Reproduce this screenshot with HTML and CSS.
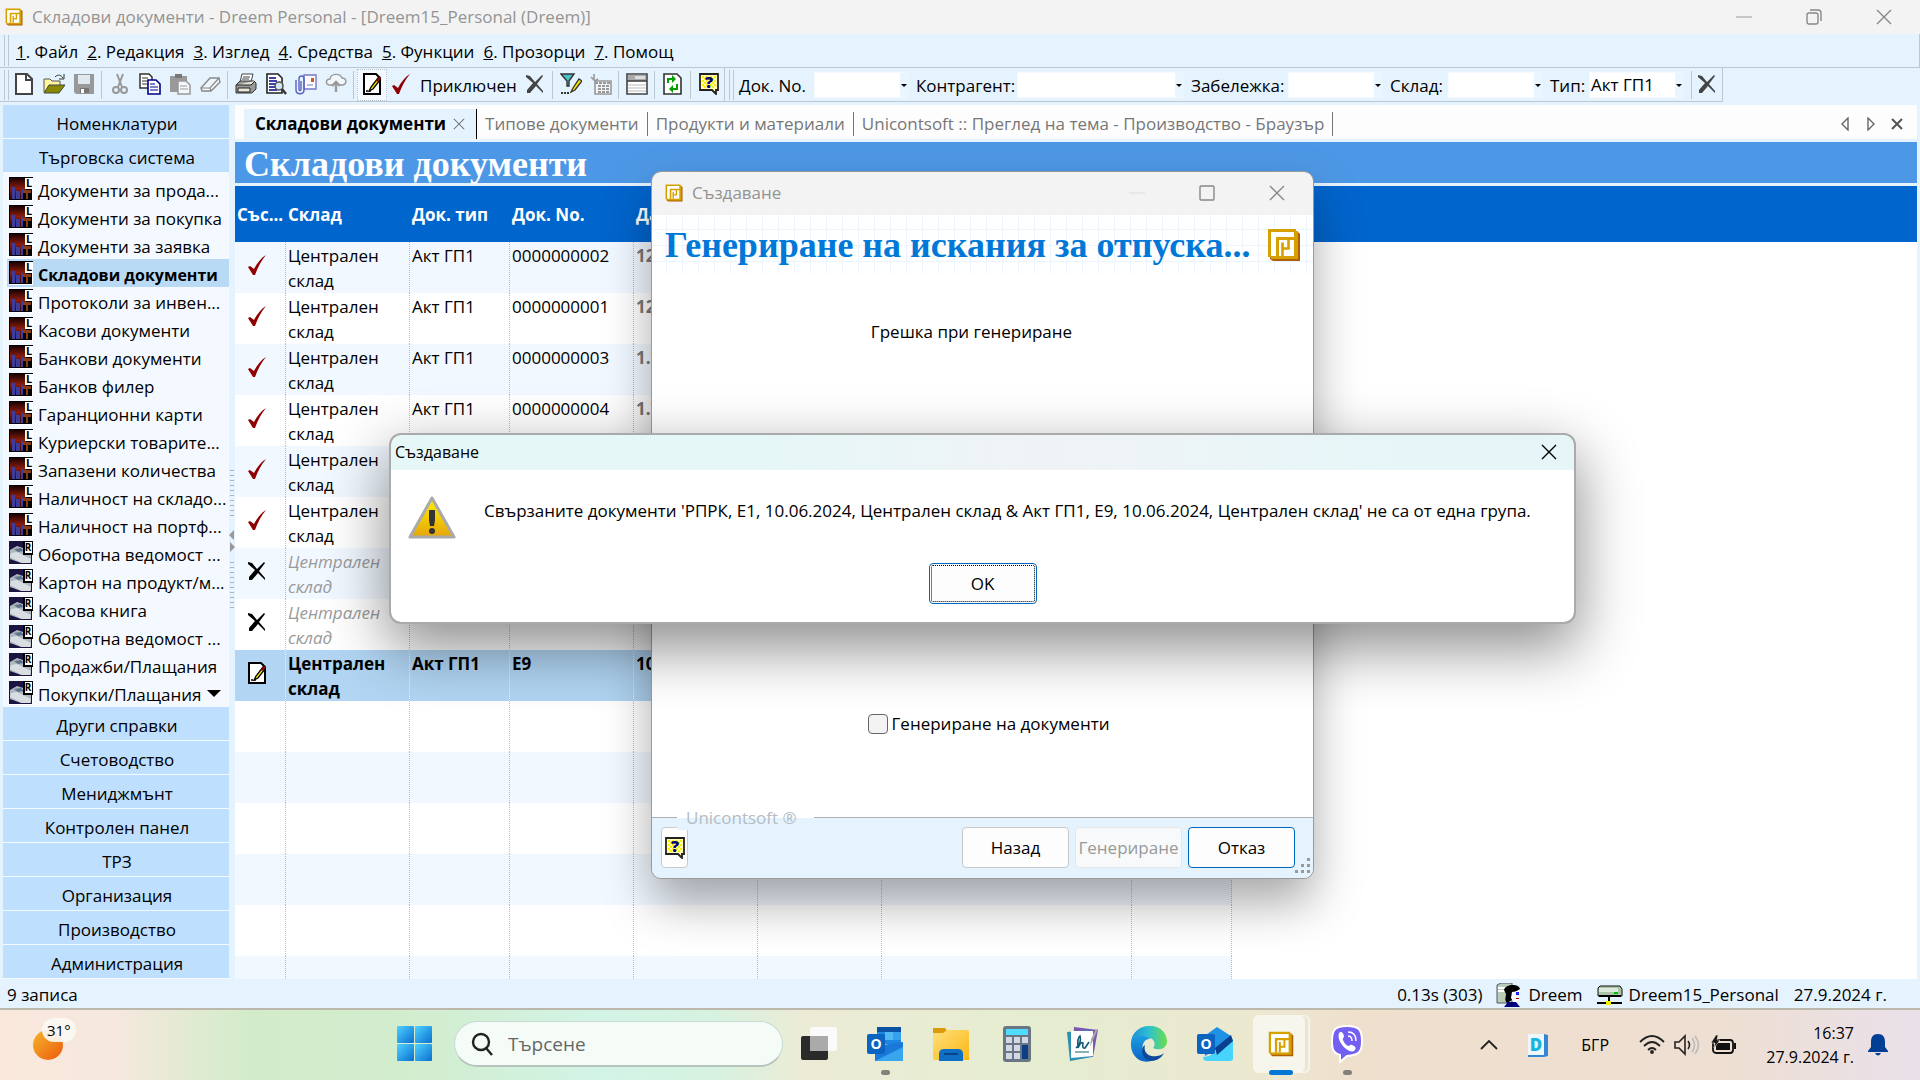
FILE: index.html
```html
<!DOCTYPE html>
<html lang="bg">
<head>
<meta charset="utf-8">
<title>Складови документи - Dreem Personal</title>
<link rel="stylesheet" href="styles.css">
</head>
<body>
<svg class="defs" aria-hidden="true">
  <defs>
    <linearGradient id="gSun" x1="0" y1="0" x2="1" y2="1"><stop offset="0" stop-color="#f3b62c"/><stop offset="1" stop-color="#ee5a0c"/></linearGradient>
    <linearGradient id="gWin" x1="0" y1="0" x2="1" y2="1"><stop offset="0" stop-color="#4fd2ff"/><stop offset="1" stop-color="#0a6fd0"/></linearGradient>
    <linearGradient id="gFolder" x1="0" y1="0" x2="1" y2="1"><stop offset="0" stop-color="#ffe07c"/><stop offset="1" stop-color="#fbb712"/></linearGradient>
    <linearGradient id="gWarn" x1="0" y1="0" x2="0" y2="1"><stop offset="0" stop-color="#fff200"/><stop offset="1" stop-color="#e6a408"/></linearGradient>
    <linearGradient id="gEdge" x1="0" y1="0" x2="1" y2="0"><stop offset="0" stop-color="#1c8fd8"/><stop offset=".5" stop-color="#2fc0d0"/><stop offset="1" stop-color="#6ade4c"/></linearGradient>
    <linearGradient id="gEdge2" x1="0" y1="0" x2="0" y2="1"><stop offset="0" stop-color="#1b9de2"/><stop offset="1" stop-color="#0b62c4"/></linearGradient>
    <linearGradient id="gRed" x1="0" y1="0" x2="0" y2="1"><stop offset="0" stop-color="#1c0202"/><stop offset=".5" stop-color="#8c1d0c"/><stop offset="1" stop-color="#2a0804"/></linearGradient>
  </defs>
  <symbol id="logo" viewBox="0 0 34 34"><path fill="#b06000" d="M6 4h25l2 2v27H6L3 31z"/><path fill="#d6a000" d="M1 1h28v2h2v28H4v-2H1z"/><path fill="#fff" d="M4 4h23v24H4z"/><path fill="none" stroke="#d6a000" stroke-width="3" d="M28 10.500H10.500V28"/><path fill="none" stroke="#d6a000" stroke-width="2.600" d="M15.500 28V14.500M21.500 11V20.500H15"/></symbol>
  <symbol id="new" viewBox="0 0 22 22"><path d="M3 1h11l5 5v15H3z" fill="#fff" stroke="#444" stroke-width="2"/><path d="M13 1v6h6" fill="none" stroke="#444" stroke-width="2"/></symbol>
  <symbol id="open" viewBox="0 0 22 22"><path d="M1 19V6h6l2 2h8v4" fill="#fff7a0" stroke="#555" stroke-width="1"/><path d="M1 20l5-8h16l-6 8z" fill="#8a8a00" stroke="#444"/><path d="M12 4c3-3 6-2 8 1M21 1v5h-5" fill="none" stroke="#333" stroke-width="1"/></symbol>
  <symbol id="save" viewBox="0 0 22 22"><path d="M1 1h20v20H3l-2-2z" fill="#999"/><path d="M5 2h12v9H5z" fill="#dfe9f2"/><path d="M7 15h9v5H7z" fill="#777"/><path d="M8 16h3v4H8z" fill="#fff"/></symbol>
  <symbol id="cut" viewBox="0 0 22 22"><path d="M8 1l5 13M14 1L9 14" stroke="#999" stroke-width="2" fill="none"/><circle cx="7" cy="17" r="3" fill="none" stroke="#999" stroke-width="2"/><circle cx="15" cy="17" r="3" fill="none" stroke="#999" stroke-width="2"/></symbol>
  <symbol id="copy" viewBox="0 0 22 22"><path d="M1 1h9l3 3v11H1z" fill="#fff" stroke="#333" stroke-width="1.5"/><path d="M3 5h6M3 8h6M3 11h6" stroke="#333"/><path d="M9 7h8l4 4v10H9z" fill="#fff" stroke="#00008b" stroke-width="1.6"/><path d="M11 11h5M11 14h8M11 17h8" stroke="#00008b"/></symbol>
  <symbol id="paste" viewBox="0 0 22 22"><path d="M1 3h17v16H1z" fill="#999"/><path d="M6 1h7v4H6z" fill="#777"/><path d="M9 8h8l4 4v9H9z" fill="#f4f8fc" stroke="#999" stroke-width="1.5"/><path d="M11 13h7M11 16h8" stroke="#999"/></symbol>
  <symbol id="erase" viewBox="0 0 22 22"><path d="M2 15l9-10h9l1 4-9 9H3z" fill="#eef5fb" stroke="#888" stroke-width="1.4"/><path d="M2 15h9l9-10M11 15l1 3" fill="none" stroke="#888" stroke-width="1.2"/></symbol>
  <symbol id="print" viewBox="0 0 22 22"><path d="M7 1h11l-2 8H5z" fill="#fff" stroke="#444"/><path d="M8 4h7M7 6h7" stroke="#444"/><path d="M1 12l4-4h14l2 2v6l-4 4H1z" fill="#999" stroke="#333"/><path d="M1 12h15l4-4M3 15h12v4H3z" fill="#e8e8d8" stroke="#222"/></symbol>
  <symbol id="preview" viewBox="0 0 22 22"><path d="M2 1h11l4 4v15H2z" fill="#fff" stroke="#222" stroke-width="1.6"/><path d="M4 5h7M4 8h8M4 11h6M4 14h6M4 17h8" stroke="#00008b" stroke-width="1.6"/><circle cx="14" cy="13" r="4" fill="#cfe6f5" stroke="#555" stroke-width="1.6"/><path d="M17 16l4 5" stroke="#333" stroke-width="2.4"/></symbol>
  <symbol id="attach" viewBox="0 0 22 22"><path d="M9 2h12v14H9z" fill="#fff" stroke="#7478c8" stroke-width="1.4"/><path d="M16 5h3v4h-3z" fill="#e05030"/><path d="M12 12h6" stroke="#7478c8"/><path d="M1 7v10c0 5 8 5 8 0V6c0-4-5-4-5 0v10c0 2 2 2 2 0V8" fill="none" stroke="#5a60c0" stroke-width="1.4"/></symbol>
  <symbol id="cloud" viewBox="0 0 22 22"><path d="M7 12H4c-4-1-3-6 1-6 1-6 10-6 12-1 5 0 5 6 1 7h-3" fill="#f2f7fb" stroke="#999" stroke-width="1.4"/><path d="M11 19V10M7 13l4-4 4 4" fill="none" stroke="#999" stroke-width="2.4"/></symbol>
  <symbol id="edit" viewBox="0 0 22 22"><path d="M3 1h12l4 4v16H3z" fill="#fff" stroke="#000" stroke-width="2"/><path d="M8 18l2-4 7-9 2 2-7 9z" fill="#f5e000" stroke="#000" stroke-width="1.3"/><path d="M15 8l3-4 2 1-3 4z" fill="#900"/><path d="M5 18h5" stroke="#000" stroke-width="1.5" stroke-dasharray="2 1"/></symbol>
  <symbol id="check" viewBox="0 0 22 22"><path d="M2 13l2-1 4 3C11 9 15 4 20 1 15 7 12 13 9 21H7z" fill="#900000"/></symbol>
  <symbol id="cross" viewBox="0 0 22 22"><path d="M2 2l4 1 5 6 7-7 1 1-6 8 6 7v2l-7-7-6 7H3v-3l6-7-7-6z" fill="currentColor"/></symbol>
  <symbol id="filter" viewBox="0 0 22 22"><path d="M1 1h13l-5 7v5H7V8z" fill="#4cc0c0" stroke="#333" stroke-width="1.4"/><path d="M11 19l2-4 6-9 3 2-7 9z" fill="#f5e000" stroke="#333" stroke-width="1.3"/><path d="M1 20h9" stroke="#333" stroke-width="2" stroke-dasharray="2 1"/></symbol>
  <symbol id="grid" viewBox="0 0 22 22"><path d="M5 8h16v13H5z" fill="#eef5fb" stroke="#999" stroke-width="1.6"/><path d="M5 10h16M8 13h11M8 16h11M8 19h11" stroke="#999" stroke-width="2" stroke-dasharray="3 1"/><path d="M1 4l4 4 3-2M4 1v6" fill="none" stroke="#999" stroke-width="1.6"/></symbol>
  <symbol id="list" viewBox="0 0 22 22"><path d="M1 1h20v20H1z" fill="#fff" stroke="#444" stroke-width="1.6"/><path d="M2 2h18v6H2z" fill="#aaa"/><path d="M9 3h10v3H9z" fill="#ddd"/><path d="M1 8h20" stroke="#444" stroke-width="1.6"/><path d="M2 12h18M2 15h18M2 18h18" stroke="#bbb"/></symbol>
  <symbol id="refresh" viewBox="0 0 22 22"><path d="M2 1h13l4 4v16H2z" fill="#fff" stroke="#333" stroke-width="1.6"/><path d="M6 10V6h6M15 11v5H9" fill="none" stroke="#00a000" stroke-width="2"/><path d="M10 2l4 4-4 4zM11 12l-4 4 4 4z" fill="#00a000"/></symbol>
  <symbol id="help" viewBox="0 0 22 22"><path d="M2 1h18v16h-2v4l-4-4H2z" fill="#fffbb0" stroke="#222" stroke-width="1.8"/><path d="M4 4h14M4 8h14M4 12h14" stroke="#ffee00" stroke-width="2" stroke-dasharray="2 2"/><path d="M4 6h14M4 10h14M4 14h14" stroke="#ffee00" stroke-width="2" stroke-dasharray="2 2" stroke-dashoffset="2"/><text x="11" y="15" text-anchor="middle" font-family="Open Sans" font-weight="800" font-size="16" fill="#00007a">?</text></symbol>
  <symbol id="docL" viewBox="0 0 24 24"><path fill="#000" d="M0 0h24v24H0z"/><path fill="url(#gRed)" d="M1 1h16v21H1z"/><path fill="#3c3c9c" d="M3 10h3v12H3zM7 14h4v8H7zM12 12h2v10h-2z"/><path fill="#8a3d14" d="M14 13h8v9h-8z"/><path fill="#000" d="M14 16h3v6h-3zM19 16h3v6h-3z"/><path fill="#fff" d="M16 1h8v11h-8zM0 23h24v1H0zM23 12h1v12h-1z"/><text x="20" y="10" text-anchor="middle" font-family="Open Sans" font-weight="700" font-size="11">L</text></symbol>
  <symbol id="docR" viewBox="0 0 24 24"><path fill="#1b1440" d="M0 0h24v24H0z"/><path fill="#aeb6c0" d="M1 9l7-4 6 2v6h8v9H12L1 18z"/><path fill="#d9dee2" d="M2 12l6-1 14 7-1 4h-8L1 16z"/><path fill="#5d7286" d="M5 8l7-1 3 3-6 1z"/><path fill="#000" d="M14 0h10v14H14z"/><path fill="#fff" d="M16 1h7v11h-7zM0 23h24v1H0zM23 14h1v10h-1z"/><text x="19" y="10" text-anchor="middle" font-family="Open Sans" font-weight="700" font-size="10">R</text></symbol>
  <symbol id="closeX" viewBox="0 0 16 16"><path d="M1 1l14 14M15 1L1 15" fill="none" stroke="currentColor" stroke-width="1.4"/></symbol>
  <symbol id="outlookO" viewBox="0 0 18 20"><rect width="18" height="20" rx="2" fill="#0a64c0"/><text x="9" y="15" text-anchor="middle" font-family="Open Sans" font-weight="700" font-size="14" fill="#fff">O</text></symbol>
</svg>

<header class="titlebar">
  <svg class="i18"><use href="#logo"/></svg>
  <h1 class="window-title">Складови документи - Dreem Personal - [Dreem15_Personal (Dreem)]</h1>
  <div class="window-buttons">
    <button aria-label="Минимизиране"><svg width="16" height="16"><path d="M0 8h16" stroke="#999"/></svg></button>
    <button aria-label="Възстановяване"><svg width="16" height="16" fill="none" stroke="#888" stroke-width="1.4"><rect x="1" y="4" width="11" height="11" rx="2"/><path d="M4 1h8q3 0 3 3v8"/></svg></button>
    <button aria-label="Затваряне"><svg class="i16"><use href="#closeX"/></svg></button>
  </div>
</header>

<nav class="menubar">
  <span class="grip"></span>
  <button><u>1</u>. Файл</button><button><u>2</u>. Редакция</button><button><u>3</u>. Изглед</button><button><u>4</u>. Средства</button><button><u>5</u>. Функции</button><button><u>6</u>. Прозорци</button><button><u>7</u>. Помощ</button>
</nav>

<div class="toolbars">
  <div class="toolbar">
    <span class="grip"></span>
    <button aria-label="Нов"><svg class="i22"><use href="#new"/></svg></button>
    <button aria-label="Отвори"><svg class="i22"><use href="#open"/></svg></button>
    <button aria-label="Запис"><svg class="i22"><use href="#save"/></svg></button>
    <span class="sep"></span>
    <button aria-label="Изрежи"><svg class="i22"><use href="#cut"/></svg></button>
    <button aria-label="Копирай"><svg class="i22"><use href="#copy"/></svg></button>
    <button aria-label="Постави"><svg class="i22"><use href="#paste"/></svg></button>
    <button aria-label="Изтрий"><svg class="i22"><use href="#erase"/></svg></button>
    <span class="sep"></span>
    <button aria-label="Печат"><svg class="i22"><use href="#print"/></svg></button>
    <button aria-label="Преглед"><svg class="i22"><use href="#preview"/></svg></button>
    <button aria-label="Прикачи"><svg class="i22"><use href="#attach"/></svg></button>
    <button aria-label="Качи"><svg class="i22"><use href="#cloud"/></svg></button>
    <span class="sep"></span>
    <button class="pressed" aria-label="Чернова"><svg class="i22"><use href="#edit"/></svg></button>
    <button class="labelled"><svg class="i22"><use href="#check"/></svg><span>Приключен</span></button>
    <button class="gray" aria-label="Анулиран"><svg class="i22"><use href="#cross"/></svg></button>
    <span class="sep"></span>
    <button aria-label="Филтър"><svg class="i22"><use href="#filter"/></svg></button>
    <button aria-label="Таблица"><svg class="i22"><use href="#grid"/></svg></button>
    <span class="sep"></span>
    <button aria-label="Списък"><svg class="i22"><use href="#list"/></svg></button>
    <span class="sep"></span>
    <button aria-label="Обнови"><svg class="i22"><use href="#refresh"/></svg></button>
    <span class="sep"></span>
    <button aria-label="Помощ"><svg class="i22"><use href="#help"/></svg></button>
  </div>
  <div class="toolbar filters">
    <span class="grip"></span>
    <label class="l-no" for="f-no">Док. No.</label><span class="combo"><select id="f-no"><option></option></select></span>
    <label class="l-partner" for="f-partner">Контрагент:</label><span class="combo wide"><select id="f-partner"><option></option></select></span>
    <label class="l-note" for="f-note">Забележка:</label><span class="combo"><select id="f-note"><option></option></select></span>
    <label class="l-store" for="f-store">Склад:</label><span class="combo"><select id="f-store"><option></option></select></span>
    <label class="l-type" for="f-type">Тип:</label><span class="combo"><select id="f-type"><option>Акт ГП1</option></select></span>
    <span class="sep"></span>
    <button class="gray" aria-label="Изчисти"><svg class="i22"><use href="#cross"/></svg></button>
  </div>
</div>

<div class="workspace">
  <aside class="sidebar">
    <button class="group">Номенклатури</button>
    <button class="group">Търговска система</button>
    <ul class="docs">
      <li><a href="#"><svg class="i24"><use href="#docL"/></svg><span>Документи за прода...</span></a></li>
      <li><a href="#"><svg class="i24"><use href="#docL"/></svg><span>Документи за покупка</span></a></li>
      <li><a href="#"><svg class="i24"><use href="#docL"/></svg><span>Документи за заявка</span></a></li>
      <li><a href="#" class="current"><svg class="i24"><use href="#docL"/></svg><span>Складови документи</span></a></li>
      <li><a href="#"><svg class="i24"><use href="#docL"/></svg><span>Протоколи за инвен...</span></a></li>
      <li><a href="#"><svg class="i24"><use href="#docL"/></svg><span>Касови документи</span></a></li>
      <li><a href="#"><svg class="i24"><use href="#docL"/></svg><span>Банкови документи</span></a></li>
      <li><a href="#"><svg class="i24"><use href="#docL"/></svg><span>Банков филер</span></a></li>
      <li><a href="#"><svg class="i24"><use href="#docL"/></svg><span>Гаранционни карти</span></a></li>
      <li><a href="#"><svg class="i24"><use href="#docL"/></svg><span>Куриерски товарите...</span></a></li>
      <li><a href="#"><svg class="i24"><use href="#docL"/></svg><span>Запазени количества</span></a></li>
      <li><a href="#"><svg class="i24"><use href="#docL"/></svg><span>Наличност на складо...</span></a></li>
      <li><a href="#"><svg class="i24"><use href="#docL"/></svg><span>Наличност на портф...</span></a></li>
      <li><a href="#"><svg class="i24"><use href="#docR"/></svg><span>Оборотна ведомост ...</span></a></li>
      <li><a href="#"><svg class="i24"><use href="#docR"/></svg><span>Картон на продукт/м...</span></a></li>
      <li><a href="#"><svg class="i24"><use href="#docR"/></svg><span>Касова книга</span></a></li>
      <li><a href="#"><svg class="i24"><use href="#docR"/></svg><span>Оборотна ведомост ...</span></a></li>
      <li><a href="#"><svg class="i24"><use href="#docR"/></svg><span>Продажби/Плащания</span></a></li>
      <li><a href="#"><svg class="i24"><use href="#docR"/></svg><span>Покупки/Плащания</span><i class="more"></i></a></li>
    </ul>
    <button class="group">Други справки</button>
    <button class="group">Счетоводство</button>
    <button class="group">Мениджмънт</button>
    <button class="group">Контролен панел</button>
    <button class="group">ТРЗ</button>
    <button class="group">Организация</button>
    <button class="group">Производство</button>
    <button class="group">Администрация</button>
  </aside>
  <div class="splitter">
    <span class="ridges"></span>
    <svg width="6" height="30"><path d="M5 4v10L0 9zM1 16v10l5-5z" fill="#999"/></svg>
    <span class="ridges"></span>
  </div>
  <main class="main">
    <nav class="tabs">
      <a href="#" class="tab active">Складови документи <svg width="12" height="12"><use href="#closeX"/></svg></a>
      <a href="#" class="tab">Типове документи</a>
      <a href="#" class="tab">Продукти и материали</a>
      <a href="#" class="tab">Unicontsoft :: Преглед на тема - Производство - Браузър</a>
      <span class="tabnav">
        <button aria-label="Назад"><svg width="10" height="14"><path d="M7 1v12L1 7z" fill="none" stroke="#666" stroke-width="1.4"/></svg></button>
        <button aria-label="Напред"><svg width="10" height="14"><path d="M2 1v12l6-6z" fill="none" stroke="#666" stroke-width="1.4"/></svg></button>
        <button aria-label="Затвори"><svg width="12" height="12"><path d="M1 1l10 10M11 1L1 11" stroke="#555" stroke-width="2"/></svg></button>
      </span>
    </nav>
    <h2 class="page-title">Складови документи</h2>
    <div class="grid">
      <table>
        <colgroup><col class="c-state"><col class="c-m"><col class="c-s"><col class="c-m"><col class="c-m"><col class="c-m"><col class="c-l"><col class="c-s"><col></colgroup>
        <thead><tr><th>Със...</th><th>Склад</th><th>Док. тип</th><th>Док. No.</th><th>Дата</th><th></th><th></th><th></th><th></th></tr></thead>
        <tbody>
          <tr><td><svg class="i22"><use href="#check"/></svg></td><td>Централен склад</td><td>Акт ГП1</td><td>0000000002</td><td class="date">12.6.2024</td><td></td><td></td><td></td><td></td></tr>
          <tr><td><svg class="i22"><use href="#check"/></svg></td><td>Централен склад</td><td>Акт ГП1</td><td>0000000001</td><td class="date">12.6.2024</td><td></td><td></td><td></td><td></td></tr>
          <tr><td><svg class="i22"><use href="#check"/></svg></td><td>Централен склад</td><td>Акт ГП1</td><td>0000000003</td><td class="date">1.7.2024</td><td></td><td></td><td></td><td></td></tr>
          <tr><td><svg class="i22"><use href="#check"/></svg></td><td>Централен склад</td><td>Акт ГП1</td><td>0000000004</td><td class="date">1.7.2024</td><td></td><td></td><td></td><td></td></tr>
          <tr><td><svg class="i22"><use href="#check"/></svg></td><td>Централен склад</td><td></td><td></td><td></td><td></td><td></td><td></td><td></td></tr>
          <tr><td><svg class="i22"><use href="#check"/></svg></td><td>Централен склад</td><td></td><td></td><td></td><td></td><td></td><td></td><td></td></tr>
          <tr class="void"><td><svg class="i22"><use href="#cross"/></svg></td><td>Централен склад</td><td></td><td></td><td></td><td></td><td></td><td></td><td></td></tr>
          <tr class="void"><td><svg class="i22"><use href="#cross"/></svg></td><td>Централен склад</td><td></td><td></td><td></td><td></td><td></td><td></td><td></td></tr>
          <tr class="selected"><td><svg class="i22"><use href="#edit"/></svg></td><td>Централен склад</td><td>Акт ГП1</td><td>E9</td><td>10.6.2024</td><td></td><td></td><td></td><td></td></tr>
          <tr class="even"><td></td><td></td><td></td><td></td><td></td><td></td><td></td><td></td><td></td></tr>
          <tr><td></td><td></td><td></td><td></td><td></td><td></td><td></td><td></td><td></td></tr>
          <tr><td></td><td></td><td></td><td></td><td></td><td></td><td></td><td></td><td></td></tr>
          <tr><td></td><td></td><td></td><td></td><td></td><td></td><td></td><td></td><td></td></tr>
          <tr><td></td><td></td><td></td><td></td><td></td><td></td><td></td><td></td><td></td></tr>
          <tr><td></td><td></td><td></td><td></td><td></td><td></td><td></td><td></td><td></td></tr>
        </tbody>
      </table>
    </div>
  </main>
</div>

<footer class="statusbar">
  <span class="count">9 записа</span>
  <span class="timing">0.13s (303)</span>
  <span class="user"><svg width="26" height="24"><path d="M1 2l4-2h11v20H1z" fill="#b8ccb8" stroke="#556"/><path d="M2 5h9M2 8h8" stroke="#fff" stroke-width="2"/><path d="M8 7c1-6 15-7 16-1l-5 3-3 8-5 3c-3-3-1-6-1-9z" fill="#000"/><path d="M16 9l7-1v9l-5 3-3-5z" fill="#fff"/><path d="M20 9h3v3h-3z" fill="#22f"/><path d="M20 15h3v1h-3z" fill="#a00"/><path d="M8 24l4-5h8l4 5z" fill="#00007a"/></svg>Dreem</span>
  <span class="base"><svg width="26" height="22"><path d="M3 2h20l2 3v7H1V4z" fill="#a9c4a9" stroke="#111"/><path d="M2 4h19v4H2z" fill="#dbe9db"/><path d="M17 8h4v2h-4z" fill="#0b0"/><path d="M2 12h22M12 13v5M0 19h25" stroke="#000" stroke-width="2"/><path d="M9 17h5v4H9z" fill="#ee0"/></svg>Dreem15_Personal</span>
  <span class="date-now">27.9.2024 г.</span>
</footer>

<section class="dialog" role="dialog" aria-label="Създаване">
  <div class="dialog-bar">
    <svg class="i18"><use href="#logo"/></svg><span>Създаване</span>
    <div class="window-buttons">
      <button aria-label="Минимизиране" disabled><svg width="16" height="16"><path d="M0 8h16" stroke="#ddd"/></svg></button>
      <button aria-label="Максимизиране"><svg width="16" height="16"><rect x="1" y="1" width="14" height="14" rx="1" fill="none" stroke="#888" stroke-width="1.4"/></svg></button>
      <button aria-label="Затваряне"><svg class="i16"><use href="#closeX"/></svg></button>
    </div>
  </div>
  <div class="dialog-head"><h2>Генериране на искания за отпуска...</h2><svg width="34" height="34"><use href="#logo"/></svg></div>
  <div class="dialog-body">
    <p>Грешка при генериране</p>
    <label><input type="checkbox">Генериране на документи</label>
  </div>
  <div class="dialog-foot">
    <span class="brand">Unicontsoft ®</span>
    <button class="helpbtn" aria-label="Помощ"><svg class="i22"><use href="#help"/></svg></button>
    <div class="actions"><button>Назад</button><button disabled>Генериране</button><button class="default">Отказ</button></div>
    <svg class="resize" width="16" height="16" fill="#999"><path d="M12 0h3v3h-3zM6 6h3v3H6zM12 6h3v3h-3zM0 12h3v3H0zM6 12h3v3H6zM12 12h3v3h-3z"/></svg>
  </div>
</section>

<section class="msgbox" role="alertdialog" aria-label="Създаване">
  <div class="msg-bar"><span>Създаване</span><button aria-label="Затваряне"><svg class="i16"><use href="#closeX"/></svg></button></div>
  <div class="msg-body">
    <svg width="48" height="44"><path d="M24 2L46 41H2z" fill="url(#gWarn)" stroke="#aaa" stroke-width="3" stroke-linejoin="round"/><path d="M21 14h6v10l-1 6h-4l-1-6z" fill="#333"/><circle cx="24" cy="35" r="3" fill="#333"/></svg>
    <p>Свързаните документи 'РПРК, Е1, 10.06.2024, Централен склад &amp; Акт ГП1, Е9, 10.06.2024, Централен склад' не са от една група.</p>
  </div>
  <button class="ok">OK</button>
</section>

<footer class="taskbar">
  <div class="weather"><svg width="52" height="48"><circle cx="19" cy="31" r="15" fill="url(#gSun)"/><rect x="13" y="4" width="34" height="24" rx="12" fill="#fbfaf6" fill-opacity=".9"/></svg><span>31°</span></div>
  <div class="apps">
    <button aria-label="Старт"><svg width="36" height="36" fill="url(#gWin)"><rect width="17" height="17" rx="1"/><rect x="18" width="17" height="17" rx="1"/><rect y="18" width="17" height="17" rx="1"/><rect x="18" y="18" width="17" height="17" rx="1"/></svg></button>
    <label class="search"><svg width="24" height="24" fill="none" stroke="#222" stroke-width="2.4"><circle cx="11" cy="10" r="8"/><path d="M16 16l6 7"/></svg><input type="text" placeholder="Търсене" aria-label="Търсене"></label>
    <button aria-label="Изглед на задачи"><svg width="36" height="36"><rect y="10" width="27" height="24" rx="2" fill="#2a2a2a"/><rect x="9" y="1" width="27" height="24" rx="2" fill="#fafafa"/><path d="M9 10h18v15H9z" fill="#aaa"/></svg></button>
    <button class="running" aria-label="Outlook"><svg width="36" height="36"><path d="M10 1h24v17H10z" fill="#1c86e0"/><path d="M10 1h24v5H10z" fill="#0a53a4"/><path d="M18 6h8v8h-8z" fill="#50b8f4"/><path d="M26 6h8v8h-8z" fill="#35a0ec"/><path d="M8 20l28-4v19H8z" fill="#1a78d8"/><path d="M8 35l28-14v14z" fill="#38a6ee"/><use href="#outlookO" y="8" width="18" height="20"/></svg></button>
    <button aria-label="Файлове"><svg width="36" height="36"><path d="M0 2h12l3 4h-3L8 9H0z" fill="#dc9a08"/><path d="M0 7h10l4-3h20q2 0 2 2v28H2q-2 0-2-2z" fill="url(#gFolder)"/><path d="M6 35v-7q0-5 5-5h14q5 0 5 5v7z" fill="#0f6fc4"/><path d="M11 28h14" stroke="#0a4488" stroke-width="2"/></svg></button>
    <button aria-label="Калкулатор"><svg width="28" height="36"><rect width="28" height="36" rx="3" fill="#6b7684"/><path d="M3 3h22v6H3z" fill="#4fdcff"/><path d="M3 11h6v6H3zM11 11h6v6h-6zM19 11h6v6h-6zM3 19h6v6H3zM11 19h6v6h-6zM3 27h6v6H3zM11 27h6v6h-6z" fill="#d4d8e4"/><path d="M19 19h6v14h-6z" fill="#0c3f86"/></svg></button>
    <button aria-label="Дневник"><svg width="34" height="36"><path d="M8 1l24 3-5 27-20-3z" fill="#7a58b0"/><path d="M1 6l22-2 3 27L4 35z" fill="#2f8fb0"/><path d="M5 5h22v25l-22 2z" fill="#fff"/><path d="M10 22q6-5 4-12-3 2-2 12 3-7 5-5-1 6 2 5l4-6" fill="none" stroke="#155a78" stroke-width="1.6"/><path d="M9 26h14" stroke="#155a78"/><path d="M32 3l-8 18 1-8 5-10z" fill="#aaa"/></svg></button>
    <button aria-label="Edge"><svg width="36" height="36"><path d="M0 17C1-5 35-6 36 15c0 8-8 10-14 7 3-3 2-10-5-10C8 12 2 16 0 17z" fill="url(#gEdge)"/><path d="M0 17c2-8 14-9 19-4-9-1-11 16 0 20 2 1 4 1 4 1C9 40-1 29 0 17z" fill="url(#gEdge2)"/><path d="M14 19c-3 12 12 14 19 8-5 10-18 10-21 2-2-4-1-8 2-10z" fill="#0d4a9c"/></svg></button>
    <button aria-label="Поща"><svg width="36" height="36"><path d="M6 11L20 1l14 9v6L8 30z" fill="#2092e6"/><path d="M12 30l24-17v19q0 3-3 3H10q-4 0-4-4z" fill="#48d4fa"/><path d="M18 22L34 9l2 6-16 14z" fill="#0b3f90"/><use href="#outlookO" y="8" width="18" height="20"/></svg></button>
    <button class="current" aria-label="Dreem"><svg width="26" height="26"><use href="#logo"/></svg></button>
    <button class="running" aria-label="Viber"><svg width="34" height="38"><path d="M17 1c12 0 15 4 15 15s-3 14-15 15l-7 6v-7C3 28 2 24 2 16 2 5 5 1 17 1z" fill="#7360f2" stroke="#fff" stroke-width="2"/><path d="M9 8c2-2 4-1 5 3 0 2-2 3-1 4 1 3 3 5 5 6 2 0 2-2 4-1 5 2 4 4 2 6-6 3-18-10-15-18z" fill="#fff"/><path d="M18 7q8 0 8 9M18 11q4 0 4 5" fill="none" stroke="#fff" stroke-width="1.4"/></svg></button>
  </div>
  <div class="tray">
    <svg width="18" height="12"><path d="M1 10l8-8 8 8" fill="none" stroke="#222" stroke-width="1.8"/></svg>
    <svg class="t-dict" width="22" height="24"><path d="M1 1h16l4 1v21l-4 1H1z" fill="#3486d6"/><path d="M1 1h16v21H1z" fill="#eef7fc"/><text x="9" y="18" text-anchor="middle" font-family="Open Sans" font-weight="800" font-size="17" fill="#18b4e0">D</text></svg>
    <span class="lang">БГР</span>
    <svg class="t-wifi" width="26" height="22" fill="none" stroke="#222" stroke-width="1.8"><path d="M1 8q12-12 24 0M5 12q8-8 16 0M9 16q4-4 8 0"/><circle cx="13" cy="18" r="1" fill="#222"/></svg>
    <svg class="t-sound" width="26" height="22" fill="none" stroke="#222" stroke-width="1.6"><path d="M1 8h4l6-6v18l-6-6H1zM14 7q3 4 0 8"/><path d="M18 4q5 7 0 14M21 2q7 9 0 18" stroke="#bbb"/></svg>
    <svg class="t-batt" width="26" height="20"><rect x="2" y="5" width="20" height="13" rx="3" fill="none" stroke="#111" stroke-width="1.8"/><path d="M5 8h14v7H5zM23 8h2v6h-2z" fill="#111"/><path d="M5 0L0 8h4l-1 5 6-8H6l1-5z" fill="#111" stroke="#efdfd3" stroke-width=".6"/></svg>
    <span class="clock">16:37<br>27.9.2024 г.</span>
    <svg width="22" height="24" fill="#003f94"><path d="M11 1c5 0 7 3 7 8v5l3 4v1H1v-1l3-4V9c0-5 2-8 7-8zM8 20h6q-3 5-6 0z"/></svg>
  </div>
</footer>
</body>
</html>
```
FILE: styles.css
```css
* { box-sizing: border-box; }
body {
  margin: 0;
  height: 100vh;
  display: flex;
  flex-direction: column;
  overflow: hidden;
  position: relative;
  background: #e5f3ff;
  color: #000;
  font: 17px/24px "Open Sans", "Noto Sans", sans-serif;
}
button, select, input { font: inherit; color: inherit; }
button { border: 0; padding: 0; background: none; white-space: nowrap; }
a { color: inherit; text-decoration: none; }
h1, h2, p, ul { margin: 0; padding: 0; }
svg { flex: none; display: block; }
.defs { position: absolute; width: 0; height: 0; }
.i16 { width: 16px; height: 16px; }
.i18 { width: 18px; height: 18px; }
.i22 { width: 22px; height: 22px; }
.i24 { width: 24px; height: 24px; }

/* Title bar */
.titlebar {
  flex: none;
  height: 34px;
  display: flex;
  align-items: center;
  gap: 9px;
  padding-left: 5px;
  background: #f3f3f3;
  color: #949494;
}
.window-title { font-size: 17px; font-weight: 400; }
.window-buttons { margin-left: auto; display: flex; color: #888; padding-right: 1px; }
.window-buttons button { width: 70px; height: 34px; display: grid; place-items: center; }

/* Menu and toolbars */
.grip { width: 5px; align-self: stretch; margin: 2px 0 1px 4px; border: solid #bcc8d2; border-width: 0 1px; }
.menubar {
  flex: none;
  height: 34px;
  display: flex;
  align-items: center;
  border-bottom: 1px solid #bdc7cf;
  border-right: 1px solid #bdc7cf;
}
.menubar .grip { margin: 1px 7px 1px 4px; }
.menubar button { margin-right: 9px; padding-top: 3px; }
.toolbars { flex: none; display: flex; height: 37px; }
.toolbar {
  height: 34px;
  display: flex;
  align-items: center;
  border: solid #bdc7cf;
  border-width: 0 1px 1px 0;
}
.toolbar button { width: 30px; height: 32px; display: flex; align-items: center; justify-content: center; padding-bottom: 2px; }
.toolbar .labelled { width: 133px; gap: 8px; justify-content: flex-start; padding-left: 3px; }
.toolbar .labelled span { padding-top: 4px; }
.toolbar .pressed { background: #f3f9ff; border: 1px dotted #b9c6d2; }
.toolbar .gray { color: #444; }
.sep { width: 1px; height: 28px; margin: 0 3px 0 2px; background: #bdc7cf; }
.filters .grip { margin-right: 5px; }
.filters label { padding-top: 2px; }
.l-no { width: 75px; }
.l-partner { width: 101px; }
.l-note { width: 97px; }
.l-store { width: 58px; }
.l-type { width: 39px; }
.combo { position: relative; width: 95px; margin-right: 7px; height: 26px; }
.combo.wide { width: 167px; }
.combo select {
  appearance: none;
  width: 100%;
  height: 26px;
  border: 1px solid #f4faff;
  border-right-width: 9px;
  border-right-color: #e9f5ff;
  border-radius: 0;
  padding: 0 0 0 1px;
  background: #fff;
}
.combo::after {
  content: "";
  position: absolute;
  right: 2px;
  top: 12px;
  border: 3px solid transparent;
  border-top-color: #000;
}
.filters .sep { margin: 0; }

/* Workspace */
.workspace { flex: 1; min-height: 0; display: flex; padding: 0 3px; }
.sidebar { width: 226px; display: flex; flex-direction: column; background: #f4f9ff; }
.group { flex: none; height: 34px; background: #bfdfff; border-bottom: 1px solid #f4faff; padding: 4px 0 0 2px; }
.docs { flex: 1; min-height: 0; overflow: hidden; list-style: none; padding: 2px 0 0 4px; }
.docs a { display: flex; align-items: center; gap: 5px; height: 28px; padding-left: 2px; font-size: 17px; white-space: nowrap; }
.docs span { padding-top: 3px; }
.docs .current { background: #b9daf5; font-weight: 700; font-size: 16px; }
.more { border: 7px solid transparent; border-top-color: #000; border-bottom: 0; }
.splitter { width: 6px; display: flex; flex-direction: column; align-items: center; justify-content: center; gap: 6px; padding-bottom: 2px; }
.ridges { width: 4px; height: 50px; background: repeating-linear-gradient(#aab4bd 0 1px, transparent 1px 5px); }
.main { flex: 1; min-width: 0; display: flex; flex-direction: column; }

.tabs { flex: none; height: 34px; display: flex; align-items: center; background: #fdfdfe; color: #777; padding: 4px 0 0 9px; margin-bottom: 3px; }
.tab { line-height: 24px; padding: 0 8px; border-right: 1px solid #777; white-space: nowrap; }
.tab.active { display: flex; align-items: center; gap: 7px; height: 30px; padding: 0 11px; background: #e5f3ff; color: #000; font-weight: 700; border-right: 1px solid #000; }
.tab.active svg { color: #666; }
.tabnav { margin-left: auto; display: flex; gap: 15px; padding-right: 14px; }
.page-title { flex: none; height: 41px; margin-bottom: 3px; padding: 3px 0 0 9px; background: #4d98e6; color: #fff; font: 700 36px/38px "Liberation Serif", serif; }
.grid { flex: 1; min-height: 0; overflow: hidden; background: #fff; }
table { width: 100%; table-layout: fixed; border-collapse: separate; border-spacing: 0; }
.c-state { width: 51px; }
.c-s { width: 100px; }
.c-m { width: 124px; }
.c-l { width: 250px; }
th { height: 56px; padding: 2px 0 0 2px; background: #0065cd; color: #fff; text-align: left; white-space: nowrap; }
td { height: 51px; padding: 1px 20px 0 2px; vertical-align: top; line-height: 25px; border-right: 1px dotted #94c5f5; }
td:nth-child(n+3) { padding-right: 0; }
td:first-child { padding: 12px 0 0 11px; }
tbody tr:nth-child(odd) td { background: #f1f8ff; }
tbody tr td:last-child, tbody tr:nth-child(odd) td:last-child { border: 0; background: #fff; }
.void td { color: #9a9a9a; font-style: italic; }
.void td:first-child { color: #000; }
.date { color: #777; font-weight: 700; }
tbody tr.selected td { background: #b1d5f3; font-weight: 700; border-right-color: #e5f3ff; }

/* Status bar */
.statusbar { flex: none; height: 29px; display: flex; align-items: center; padding: 2px 33px 0 7px; }
.statusbar span { display: flex; align-items: center; gap: 6px; }
.timing { margin-left: auto; }
.user, .base { margin-left: 14px; }
.date-now { margin-left: 15px; }

/* Wizard window */
.dialog {
  position: absolute;
  left: 652px;
  top: 172px;
  width: 661px;
  height: 706px;
  display: flex;
  flex-direction: column;
  border-radius: 9px;
  overflow: hidden;
  background: #fff;
  outline: 1px solid #9a9a9a;
  box-shadow: 0 24px 48px rgba(0, 0, 0, .35);
}
.dialog-bar { flex: none; height: 43px; display: flex; align-items: center; gap: 9px; padding: 0 0 2px 13px; background: #f3f3f3; color: #949494; }
.dialog-head {
  flex: none;
  height: 59px;
  display: flex;
  align-items: center;
  justify-content: space-between;
  padding: 0 12px 0 13px;
  background: repeating-linear-gradient(90deg, transparent 0 14px, #eaf5ff 14px 15px, transparent 15px 16px), repeating-linear-gradient(transparent 0 14px, #eaf5ff 14px 15px, transparent 15px 16px);
}
.dialog-head h2 { color: #0078d7; font: 700 36px/40px "Liberation Serif", serif; white-space: nowrap; }
.dialog-body { flex: 1; display: flex; flex-direction: column; align-items: center; justify-content: space-between; padding: 46px 0 81px; }
.dialog-body p { padding-right: 22px; }
.dialog-body label { display: flex; align-items: center; gap: 4px; padding-left: 12px; }
.dialog-body input { appearance: none; width: 20px; height: 20px; margin: 0; border: 1px solid #666; border-radius: 4px; background: #f3f3f3; }
.dialog-foot { flex: none; height: 61px; position: relative; display: flex; align-items: center; padding: 0 18px 1px 9px; background: #e5f3ff; border-top: 1px solid #aab0b5; }
.brand { position: absolute; left: 25px; top: -12px; padding: 0 17px 0 9px; color: #b4bcc4; background: linear-gradient(#fff 50%, #e5f3ff 50%); }
.dialog-foot button { width: 107px; height: 41px; border: 1px solid #c9c9c9; border-radius: 4px; background: #fdfdfd; }
.dialog-foot .helpbtn { width: 27px; display: grid; place-items: center; }
.actions { display: flex; gap: 6px; margin-left: auto; }
.actions button:disabled { color: #999; border-color: #e6e6e6; background: #f7f9fa; }
.dialog-foot .default { border-color: #0067c0; }
.resize { position: absolute; right: 2px; bottom: 4px; }

/* Message box */
.msgbox {
  position: absolute;
  left: 391px;
  top: 435px;
  width: 1183px;
  height: 187px;
  display: flex;
  flex-direction: column;
  border-radius: 10px;
  overflow: hidden;
  background: #fff;
  outline: 2px solid #aaa;
  box-shadow: 0 22px 60px 4px rgba(0, 0, 0, .45);
}
.msg-bar { flex: none; height: 35px; display: flex; align-items: center; justify-content: space-between; padding: 0 17px 2px 4px; background: linear-gradient(90deg, #e5f7f7 30%, #f0f3f6 55%, #e6f6f8 85%); font-size: 16px; }
.msg-body { display: flex; gap: 28px; padding: 26px 17px 0; }
.msg-body p { padding-top: 3px; white-space: nowrap; }
.ok { width: 108px; height: 41px; margin: auto auto 18px; border: 1px solid #0067c0; border-radius: 4px; background: #fdfdfd; outline: 1px dotted #000; outline-offset: -3px; }

/* Taskbar */
.taskbar {
  flex: none;
  height: 72px;
  position: relative;
  display: flex;
  align-items: center;
  justify-content: space-between;
  padding: 0 31px;
  border-top: 2px solid #bcb9ac;
  background: linear-gradient(90deg, #fae8dc, #f6e8de 6%, #d2ecc9 13%, #d2edcf 22%, #d2f4e6 31%, #d6f2e0 37%, #ecebd6 42%, #e5edd0 54%, #ece8d0 66%, #efdfcd 71%, #eedfd3 90%, #e9e0ea);
}
.weather { display: flex; margin: -14px 0 0 -2px; }
.weather span { margin: 6px 0 0 -34px; font-size: 15px; line-height: 20px; }
.apps { display: flex; align-items: center; height: 72px; position: absolute; left: 382px; top: -2px; }
.apps button { position: relative; width: 66px; height: 58px; display: grid; place-items: center; }
.search { display: flex; align-items: center; gap: 14px; width: 329px; height: 46px; margin: 0 3px 0 6px; padding-left: 15px; border: 1px solid #c6dcd2; border-bottom: 2px solid #b5c4bc; border-radius: 23px; background: #f5fcf8; }
.search input { width: 240px; border: 0; padding: 0; background: none; font-size: 19px; outline: 0; }
.search input::placeholder { color: #666; opacity: 1; }
.apps .current::before { content: ""; position: absolute; inset: 0 9px 0 5px; border-radius: 6px; background: #f7f6ec; box-shadow: 4px 0 0 -1px #e9e5d2, 5px 0 0 0 #f6f4ea; }
.apps .current svg { position: relative; }
.apps .running::after, .apps .current::after { content: ""; position: absolute; left: 29px; bottom: -2px; width: 9px; height: 5px; border-radius: 3px; background: #85807a; }
.apps .current::after { left: 21px; width: 24px; background: #0078d4; }
.tray { display: flex; align-items: center; margin-left: auto; font-size: 16px; }
.t-dict { margin-left: 29px; }
.lang { margin: 0 30px 0 32px; }
.t-sound { margin-left: 9px; }
.t-batt { margin-left: 11px; }
.clock { width: 117px; text-align: right; line-height: 24px; margin-right: 13px; white-space: nowrap; }
```
